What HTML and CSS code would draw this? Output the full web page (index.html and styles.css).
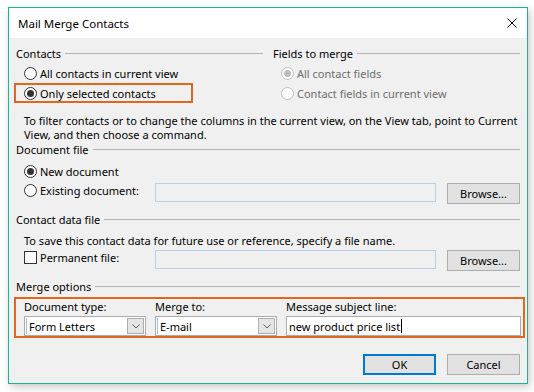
FILE: index.html
```html
<!DOCTYPE html>
<html lang="en">
<head>
<meta charset="utf-8">
<title>Mail Merge Contacts</title>
<link rel="stylesheet" href="styles.css">
</head>
<body>
<div class="screen">
  <div class="window">
    <div class="titlebar">
      <span class="title">Mail Merge Contacts</span>
      <svg class="close" width="10" height="10" viewBox="0 0 10 10"><path d="M0.5 0.5 L9.5 9.5 M9.5 0.5 L0.5 9.5" stroke="#000" stroke-width="1" fill="none"/></svg>
    </div>
    <div class="content">
      <div class="cols">
        <div class="col">
          <div class="group-head"><span>Contacts</span><i class="rule"></i></div>
          <div class="opt"><span class="radio"></span>All contacts in current view</div>
          <div class="opt second highlight"><span class="radio on"></span>Only selected contacts</div>
        </div>
        <div class="col">
          <div class="group-head"><span>Fields to merge</span><i class="rule"></i></div>
          <div class="opt disabled"><span class="radio on"></span>All contact fields</div>
          <div class="opt second disabled"><span class="radio"></span>Contact fields in current view</div>
        </div>
      </div>
      <p class="note">To filter contacts or to change the columns in the current view, on the View tab, point to Current<br>View, and then choose a command.</p>

      <div class="group-head"><span>Document file</span><i class="rule"></i></div>
      <div class="opt single"><span class="radio on"></span>New document</div>
      <div class="file-row">
        <div class="lbl"><span class="radio"></span>Existing document:</div>
        <div class="field"></div>
        <div class="btn">Browse...</div>
      </div>

      <div class="group-head gap8"><span>Contact data file</span><i class="rule"></i></div>
      <p class="note note2">To save this contact data for future use or reference, specify a file name.</p>
      <div class="file-row perm">
        <div class="lbl tall"><span class="check"></span>Permanent file:</div>
        <div class="field"></div>
        <div class="btn">Browse...</div>
      </div>

      <div class="group-head gap8"><span>Merge options</span><i class="rule"></i></div>
      <div class="merge-box">
        <div class="mlabel">Document type:</div>
        <div class="mlabel">Merge to:</div>
        <div class="mlabel">Message subject line:</div>
        <div class="combo"><span class="text">Form Letters</span><span class="drop"><svg width="8" height="5" viewBox="0 0 8 5"><path d="M0.5 0.5 L4 4 L7.5 0.5" stroke="#606060" fill="none"/></svg></span></div>
        <div class="combo"><span class="text">E-mail</span><span class="drop"><svg width="8" height="5" viewBox="0 0 8 5"><path d="M0.5 0.5 L4 4 L7.5 0.5" stroke="#606060" fill="none"/></svg></span></div>
        <div class="textin"><span>new product price list</span><span class="caret"></span></div>
      </div>

      <div class="actions">
        <div class="btn default">OK</div>
        <div class="btn">Cancel</div>
      </div>
    </div>
  </div>
</div>
</body>
</html>
```
FILE: styles.css
```css
* { box-sizing: border-box; }
html, body { margin: 0; padding: 0; }
body {
  width: 534px;
  height: 392px;
  overflow: hidden;
  background: #fff;
  font-family: "Noto Sans", "Segoe UI", sans-serif;
  font-size: 11px;
  color: #000;
}
.screen { padding: 7px 0 0 8px; }
.window {
  width: 520px;
  height: 377px;
  border: 1px solid #1ab394;
  background: #f0f0f0;
  display: flex;
  flex-direction: column;
  box-shadow: 2px 3px 8px rgba(0, 0, 0, 0.22);
}
.titlebar {
  flex: none;
  height: 30px;
  background: #fff;
  display: flex;
  align-items: center;
  justify-content: space-between;
  padding: 0 10px 0 9px;
}
.title { line-height: 15px; font-size: 11.5px; }
.close { display: block; }
.content {
  flex: 1;
  padding: 0 7px;
  display: flex;
  flex-direction: column;
}
.cols {
  display: grid;
  grid-template-columns: 247px 247px;
  column-gap: 10px;
  margin-top: 8px;
}
.col { display: flex; flex-direction: column; }
.group-head {
  display: flex;
  align-items: center;
  gap: 4px;
  height: 15px;
  line-height: 15px;
  white-space: nowrap;
}
.group-head.gap8 { margin-top: 8px; }
.rule { flex: 1; height: 1px; background: #b4b4b4; }
.opt {
  display: flex;
  align-items: center;
  height: 18px;
  margin-top: 3px;
  padding-left: 8px;
  white-space: nowrap;
}
.opt.second { height: 20px; margin-top: 1px; }
.opt.single { margin-top: 5px; }
.opt.highlight {
  width: 179px;
  margin-left: -2px;
  border: 2px solid #e2661d;
}
.radio {
  flex: none;
  width: 13px;
  height: 13px;
  border: 1px solid #333;
  border-radius: 50%;
  background: #fff;
  margin-right: 3px;
  display: flex;
  align-items: center;
  justify-content: center;
}
.radio.on::after {
  content: "";
  width: 7px;
  height: 7px;
  border-radius: 50%;
  background: #333;
}
.disabled { color: #6d6d6d; }
.disabled .radio { border-color: #bcbcbc; }
.disabled .radio.on::after { background: #bcbcbc; }
.note {
  margin: 11px 0 0 8px;
  line-height: 14px;
  white-space: nowrap;
}
.note.note2 { margin-top: 7px; }
.file-row {
  display: flex;
  align-items: flex-start;
  padding-left: 8px;
  margin-top: 3px;
}
.file-row.perm { margin-top: 2px; }
.lbl {
  flex: none;
  width: 131px;
  height: 14px;
  display: flex;
  align-items: center;
  white-space: nowrap;
}
.lbl.tall { height: 15px; }
.check {
  flex: none;
  width: 13px;
  height: 13px;
  border: 1px solid #333;
  background: #fff;
  margin-right: 3px;
}
.field {
  flex: 1;
  height: 19px;
  border: 1px solid #b7cfe6;
  background: #f0f0f0;
  margin-right: 11px;
}
.btn {
  flex: none;
  width: 73px;
  height: 21px;
  border: 1px solid #adadad;
  background: #e1e1e1;
  display: flex;
  align-items: center;
  justify-content: center;
}
.btn.default { border: 2px solid #0078d7; }
.merge-box {
  margin: 3px -5px 0 -2px;
  height: 41px;
  border: 2px solid #e2661d;
  padding: 0 2px 0 8px;
  display: grid;
  grid-template-columns: 122px 122px 1fr;
  grid-template-rows: 15px 20px;
  column-gap: 9px;
  row-gap: 2px;
}
.mlabel { line-height: 15px; white-space: nowrap; }
.combo {
  display: flex;
  align-items: center;
  border: 1px solid #acacac;
  background: #fff;
  padding-left: 1px;
}
.combo::before {
  content: "";
  width: 1px;
  height: 16px;
  background: #99c2ea;
  margin-right: 2px;
}
.combo .drop {
  margin-left: auto;
  margin-right: 1px;
  width: 17px;
  height: 16px;
  border: 1px solid #adadad;
  background: #e5e5e5;
  display: flex;
  align-items: center;
  justify-content: center;
}
.drop svg { display: block; }
.textin {
  display: flex;
  align-items: center;
  border: 1px solid #acacac;
  background: #fff;
  padding-left: 2px;
}
.caret {
  width: 1px;
  height: 14px;
  background: #000;
  margin-left: 1px;
}
.actions {
  display: flex;
  justify-content: flex-end;
  gap: 11px;
  margin-top: 16px;
}
```
